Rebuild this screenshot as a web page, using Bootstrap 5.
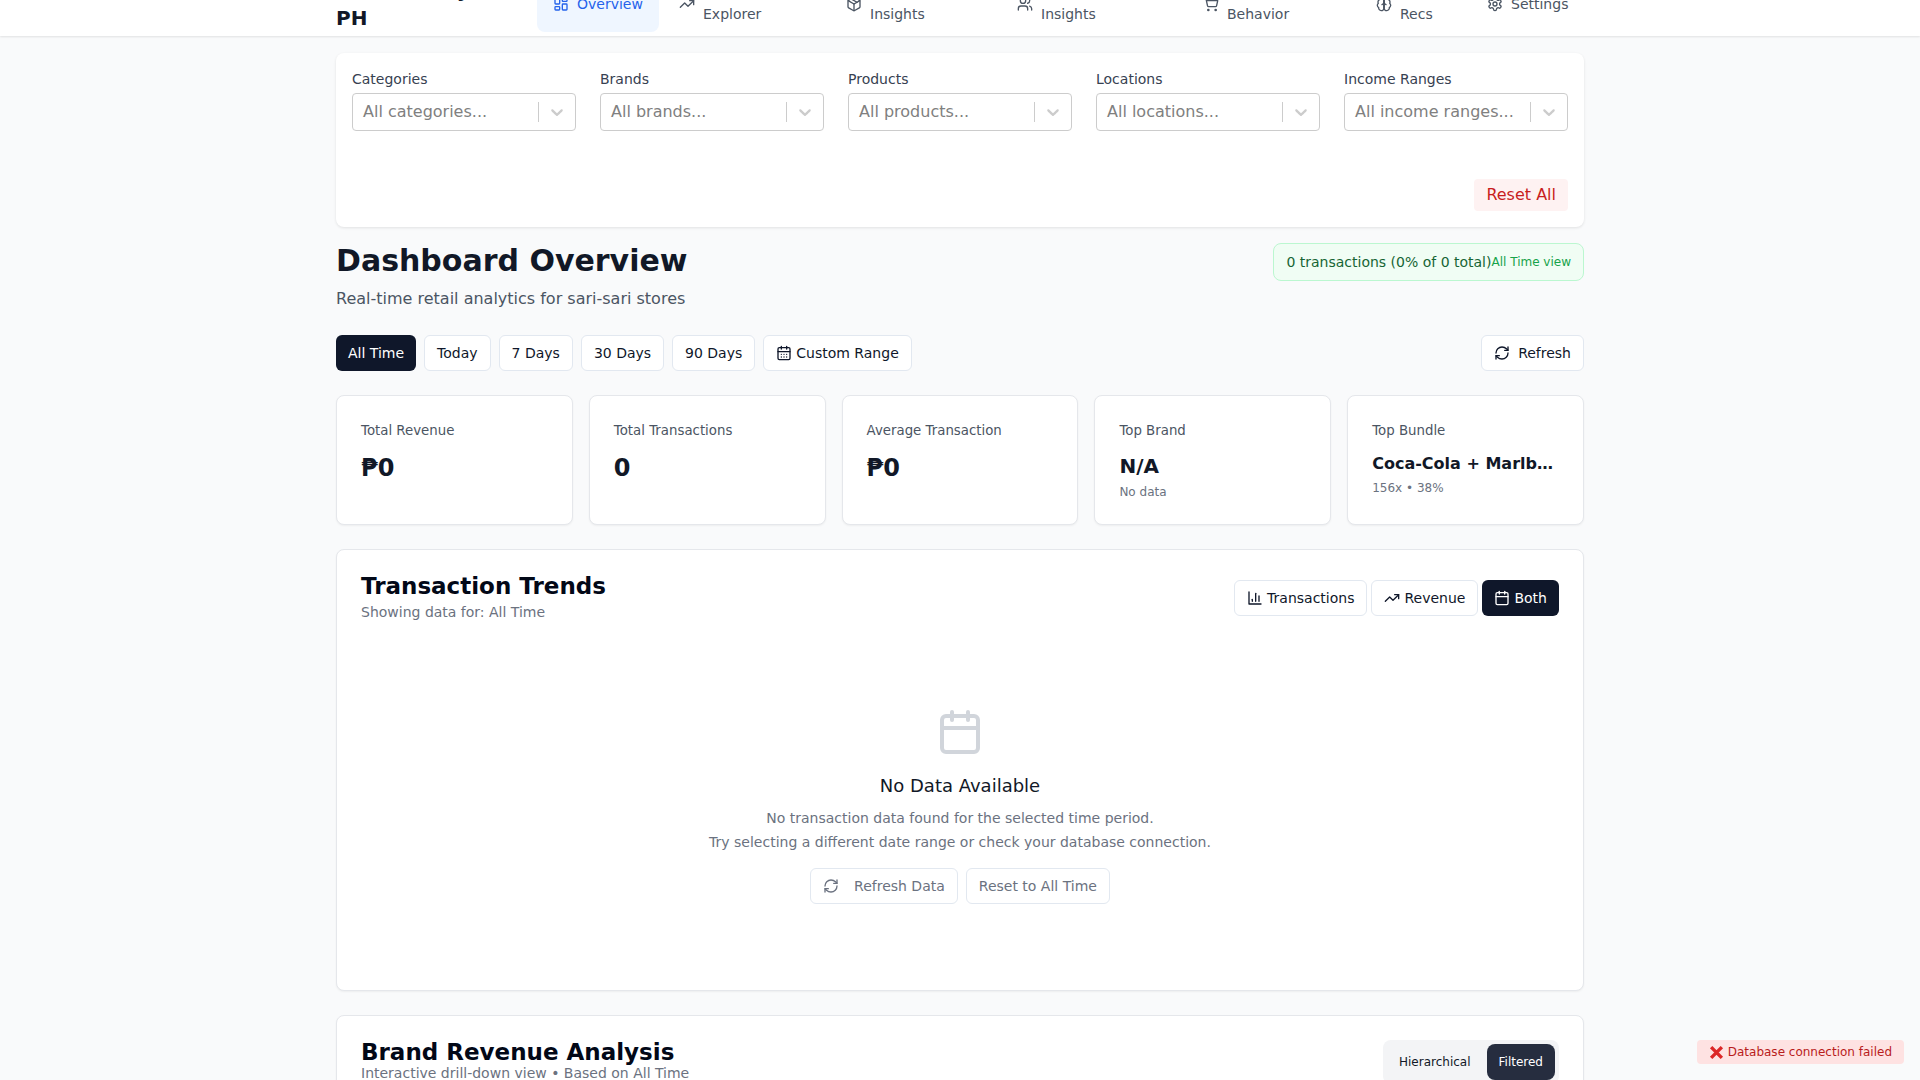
<!DOCTYPE html>
<html lang="en">
<head>
    <meta charset="UTF-8">
    <meta name="viewport" content="width=device-width, initial-scale=1.0">
    <title>Scout Analytics PH</title>
    <link href="https://cdn.jsdelivr.net/npm/bootstrap@5.3.0/dist/css/bootstrap.min.css" rel="stylesheet">

    <style>
        html, body { height: 100vh; overflow: hidden; }
        body {
            background: #f9fafb;
            font-family: "DejaVu Sans", sans-serif;
            color: #111827;
        }
        .ico { width: 16px; height: 16px; flex-shrink: 0; fill: none; stroke: currentColor; stroke-width: 2; stroke-linecap: round; stroke-linejoin: round; }

        /* Top bar: taller than its box, the first lines are cut off */
        .top-bar { background: #fff; height: 36px; box-shadow: 0 1px 2px rgba(0,0,0,.1); overflow: hidden; }
        .page-wrap { width: 1280px; padding: 0 16px; margin: 0 auto; }
        .top-row { height: 32px; }
        .brand-name { width: 185px; height: 56px; flex-shrink: 0; font-size: 20px; line-height: 28px; font-weight: 700; color: #111827; }
        .tab-row { height: 56px; gap: 4px; flex-shrink: 0; }
        .tab-item { display: flex; align-items: center; gap: 8px; padding: 0 16px; border-radius: 8px; font-size: 14px; line-height: 20px; color: #4b5563; }
        .tab-item.on { background: #eff6ff; color: #2563eb; }
        .tw-1 { width: 122px; } .tw-2 { width: 163px; } .tw-3 { width: 167px; } .tw-4 { width: 182px; }
        .tw-5 { width: 169px; } .tw-6 { width: 107px; } .tw-7 { width: 113px; }

        /* Filters */
        .filter-box { background: #fff; border-radius: 8px; box-shadow: 0 1px 3px rgba(0,0,0,.1); padding: 16px; margin-top: 17px; height: 174px; }
        .filter-label { font-size: 14px; line-height: 20px; color: #374151; margin-bottom: 4px; }
        .fake-select { height: 38px; border: 1px solid #ccc; border-radius: 4px; background: #fff; padding-left: 10px; }
        .fake-select span { flex: 1; font-size: 16px; color: #808080; white-space: nowrap; }
        .sel-sep { width: 1px; height: 20px; background: #ccc; }
        .sel-arrow { width: 20px; height: 20px; margin: 0 8px; fill: #ccc; }
        .reset-btn { font-size: 16px; line-height: 24px; padding: 4px 12px; color: #c81e1e; background: #fef2f2; border: 0; border-radius: 4px; margin-top: 48px; }

        /* Heading */
        .head-row { margin-top: 16px; }
        .page-title { font-size: 30px; line-height: 36px; font-weight: 700; color: #111827; margin: 0; }
        .page-sub { font-size: 16px; line-height: 24px; color: #4b5563; margin: 8px 0 0; }
        .status-pill { background: #f0fdf4; border: 1px solid #bbf7d0; border-radius: 8px; padding: 8px 12px; font-size: 14px; line-height: 20px; color: #166534; }
        .status-pill small { font-size: 12px; color: #16a34a; }

        /* Buttons */
        .tool-btn { display: inline-flex; align-items: center; gap: 4px; height: 36px; padding: 7px 12px; font-size: 14px; line-height: 20px; color: #0f172a; background: #fff; border: 1px solid #e2e8f0; border-radius: 6px; }
        .tool-btn.on { background: #0f172a; color: #fff; border: 0; padding: 8px 12px; }
        .tool-btn.dim { color: #6b7280; }
        .date-row { margin-top: 24px; }

        /* Stats */
        .stat-row { margin-top: 8px; }
        .stat-box { height: 130px; background: #fff; border: 1px solid #e5e7eb; border-radius: 8px; box-shadow: 0 1px 2px rgba(0,0,0,.05); padding: 25px 24px 24px; }
        .stat-label { font-size: 13.33px; line-height: 20px; color: #4b5563; }
        .stat-big { font-size: 24px; line-height: 32px; font-weight: 700; color: #111827; margin-top: 11px; }
        .stat-mid { font-size: 20px; line-height: 28px; font-weight: 700; color: #111827; margin-top: 11px; }
        .stat-low { font-size: 16px; line-height: 28px; font-weight: 700; color: #111827; margin-top: 9px; white-space: nowrap; overflow: hidden; text-overflow: ellipsis; }
        .stat-note { font-size: 12px; line-height: 16px; color: #6b7280; margin-top: 2px; }
        .stat-mid + .stat-note { margin-top: 4px; }

        /* Panels */
        .panel-box { background: #fff; border: 1px solid #e5e7eb; border-radius: 8px; box-shadow: 0 1px 2px rgba(0,0,0,.05); padding: 24px; }
        .trend-panel { margin-top: 24px; height: 442px; }
        .brand-panel { margin-top: 24px; height: 300px; }
        .panel-title { font-size: 23px; line-height: 24px; font-weight: 700; color: #020817; margin: 0; }
        .panel-sub { font-size: 14px; line-height: 20px; color: #6b7280; margin: 4px 0 0; }
        .brand-panel .panel-sub { margin-top: -1px; }
        .empty-wrap { margin-top: 86px; }
        .empty-ico { width: 48px; height: 48px; fill: none; stroke: #d1d5db; stroke-width: 2; stroke-linecap: round; stroke-linejoin: round; }
        .empty-title { font-size: 18px; line-height: 28px; font-weight: 400; color: #111827; margin: 16px 0 0; }
        .empty-text { font-size: 14px; line-height: 24px; color: #6b7280; margin: 6px 0 0; }
        .empty-btns { margin-top: 14px; }
        .gap-wide { gap: 15px; }

        .mode-switch { background: #f3f4f6; border-radius: 8px; padding: 4px; gap: 4px; }
        .mode-btn { font-size: 12px; line-height: 16px; padding: 10px 12px; height: 36px; border-radius: 8px; color: #111827; }
        .mode-btn.on { background: #262d3f; color: #fff; }

        /* Toast */
        .err-toast { position: fixed; right: 16px; bottom: 16px; height: 24px; display: flex; align-items: center; gap: 4px; padding: 0 12px; background: #fee2e2; border-radius: 4px; font-size: 12px; color: #b91c1c; }
        .err-x { width: 15px; height: 15px; stroke: #dc2626; stroke-width: 3.2; fill: none; }
    </style>
</head>
<body>

    <!-- Icone -->
    <svg width="0" height="0" class="position-absolute">
        <symbol id="i-dash" viewBox="0 0 24 24"><rect x="3" y="3" width="7" height="9" rx="1"/><rect x="14" y="3" width="7" height="5" rx="1"/><rect x="14" y="12" width="7" height="9" rx="1"/><rect x="3" y="16" width="7" height="5" rx="1"/></symbol>
        <symbol id="i-trend" viewBox="0 0 24 24"><polyline points="22 7 13.5 15.5 8.5 10.5 2 17"/><polyline points="16 7 22 7 22 13"/></symbol>
        <symbol id="i-box" viewBox="0 0 24 24"><path d="m7.5 4.27 9 5.15"/><path d="M21 8a2 2 0 0 0-1-1.73l-7-4a2 2 0 0 0-2 0l-7 4A2 2 0 0 0 3 8v8a2 2 0 0 0 1 1.73l7 4a2 2 0 0 0 2 0l7-4A2 2 0 0 0 21 16Z"/><path d="m3.3 7 8.7 5 8.7-5"/><path d="M12 22V12"/></symbol>
        <symbol id="i-users" viewBox="0 0 24 24"><path d="M16 21v-2a4 4 0 0 0-4-4H6a4 4 0 0 0-4 4v2"/><circle cx="9" cy="7" r="4"/><path d="M22 21v-2a4 4 0 0 0-3-3.87"/><path d="M16 3.13a4 4 0 0 1 0 7.75"/></symbol>
        <symbol id="i-cart" viewBox="0 0 24 24"><circle cx="8" cy="21" r="1"/><circle cx="19" cy="21" r="1"/><path d="M2.05 2.05h2l2.66 12.42a2 2 0 0 0 2 1.58h9.78a2 2 0 0 0 1.95-1.57l1.65-7.43H5.12"/></symbol>
        <symbol id="i-brain" viewBox="0 0 24 24"><path d="M12 5a3 3 0 1 0-5.997.125 4 4 0 0 0-2.526 5.77 4 4 0 0 0 .556 6.588A4 4 0 1 0 12 18Z"/><path d="M12 5a3 3 0 1 1 5.997.125 4 4 0 0 1 2.526 5.77 4 4 0 0 1-.556 6.588A4 4 0 1 1 12 18Z"/><path d="M15 13a4.5 4.5 0 0 1-3-4 4.5 4.5 0 0 1-3 4"/><path d="M12 18V5"/></symbol>
        <symbol id="i-gear" viewBox="0 0 24 24"><path d="M12.22 2h-.44a2 2 0 0 0-2 2v.18a2 2 0 0 1-1 1.73l-.43.25a2 2 0 0 1-2 0l-.15-.08a2 2 0 0 0-2.73.73l-.22.38a2 2 0 0 0 .73 2.73l.15.1a2 2 0 0 1 1 1.72v.51a2 2 0 0 1-1 1.74l-.15.09a2 2 0 0 0-.73 2.73l.22.38a2 2 0 0 0 2.73.73l.15-.08a2 2 0 0 1 2 0l.43.25a2 2 0 0 1 1 1.73V20a2 2 0 0 0 2 2h.44a2 2 0 0 0 2-2v-.18a2 2 0 0 1 1-1.73l.43-.25a2 2 0 0 1 2 0l.15.08a2 2 0 0 0 2.73-.73l.22-.39a2 2 0 0 0-.73-2.73l-.15-.08a2 2 0 0 1-1-1.74v-.5a2 2 0 0 1 1-1.74l.15-.09a2 2 0 0 0 .73-2.73l-.22-.38a2 2 0 0 0-2.73-.73l-.15.08a2 2 0 0 1-2 0l-.43-.25a2 2 0 0 1-1-1.73V4a2 2 0 0 0-2-2z"/><circle cx="12" cy="12" r="3"/></symbol>
        <symbol id="i-cal" viewBox="0 0 24 24"><rect x="3" y="4" width="18" height="18" rx="2"/><line x1="16" y1="2" x2="16" y2="6"/><line x1="8" y1="2" x2="8" y2="6"/><line x1="3" y1="10" x2="21" y2="10"/></symbol>
        <symbol id="i-caldays" viewBox="0 0 24 24"><rect x="3" y="4" width="18" height="18" rx="2"/><path d="M16 2v4M8 2v4M3 10h18M8 14h.01M12 14h.01M16 14h.01M8 18h.01M12 18h.01M16 18h.01"/></symbol>
        <symbol id="i-refresh" viewBox="0 0 24 24"><path d="M3 12a9 9 0 0 1 9-9 9.75 9.75 0 0 1 6.74 2.74L21 8"/><path d="M21 3v5h-5"/><path d="M21 12a9 9 0 0 1-9 9 9.75 9.75 0 0 1-6.74-2.74L3 16"/><path d="M8 16H3v5"/></symbol>
        <symbol id="i-bars" viewBox="0 0 24 24"><path d="M3 3v18h18"/><path d="M18 17V9"/><path d="M13 17V5"/><path d="M8 17v-3"/></symbol>
        <symbol id="i-arrow" viewBox="0 0 20 20"><path d="M4.516 7.548c0.436-0.446 1.043-0.481 1.576 0l3.908 3.747 3.908-3.747c0.533-0.481 1.141-0.446 1.574 0 0.436 0.445 0.408 1.197 0 1.615-0.406 0.418-4.695 4.502-4.695 4.502-0.217 0.223-0.502 0.335-0.787 0.335s-0.57-0.112-0.789-0.335c0 0-4.287-4.084-4.695-4.502s-0.436-1.17 0-1.615z"/></symbol>
    </svg>

    <!-- Top bar -->
    <header class="top-bar">
        <div class="page-wrap">
            <div class="top-row d-flex justify-content-between align-items-end">
                <div class="brand-name">Scout Analytics PH</div>
                <nav class="tab-row d-flex">
                    <div class="tab-item on tw-1"><svg class="ico"><use href="#i-dash"/></svg><span>Overview</span></div>
                    <div class="tab-item tw-2"><svg class="ico"><use href="#i-trend"/></svg><span>Transaction Explorer</span></div>
                    <div class="tab-item tw-3"><svg class="ico"><use href="#i-box"/></svg><span>Product Mix Insights</span></div>
                    <div class="tab-item tw-4"><svg class="ico"><use href="#i-users"/></svg><span>Customer<br>Insights</span></div>
                    <div class="tab-item tw-5"><svg class="ico"><use href="#i-cart"/></svg><span>Consumer Behavior</span></div>
                    <div class="tab-item tw-6"><svg class="ico"><use href="#i-brain"/></svg><span>AI<br>Recs</span></div>
                    <div class="tab-item tw-7"><svg class="ico"><use href="#i-gear"/></svg><span>Settings</span></div>
                </nav>
            </div>
        </div>
    </header>

    <main class="page-wrap">

        <!-- Filtri -->
        <section class="filter-box">
            <div class="row row-cols-5 g-4">
                <div class="col">
                    <div class="filter-label">Categories</div>
                    <div class="fake-select d-flex align-items-center"><span>All categories...</span><i class="sel-sep"></i><svg class="sel-arrow"><use href="#i-arrow"/></svg></div>
                </div>
                <div class="col">
                    <div class="filter-label">Brands</div>
                    <div class="fake-select d-flex align-items-center"><span>All brands...</span><i class="sel-sep"></i><svg class="sel-arrow"><use href="#i-arrow"/></svg></div>
                </div>
                <div class="col">
                    <div class="filter-label">Products</div>
                    <div class="fake-select d-flex align-items-center"><span>All products...</span><i class="sel-sep"></i><svg class="sel-arrow"><use href="#i-arrow"/></svg></div>
                </div>
                <div class="col">
                    <div class="filter-label">Locations</div>
                    <div class="fake-select d-flex align-items-center"><span>All locations...</span><i class="sel-sep"></i><svg class="sel-arrow"><use href="#i-arrow"/></svg></div>
                </div>
                <div class="col">
                    <div class="filter-label">Income Ranges</div>
                    <div class="fake-select d-flex align-items-center"><span>All income ranges...</span><i class="sel-sep"></i><svg class="sel-arrow"><use href="#i-arrow"/></svg></div>
                </div>
            </div>
            <div class="d-flex justify-content-end"><button class="reset-btn" type="button">Reset All</button></div>
        </section>

        <!-- Titolo -->
        <section class="head-row d-flex justify-content-between align-items-start">
            <div>
                <h1 class="page-title">Dashboard Overview</h1>
                <p class="page-sub">Real-time retail analytics for sari-sari stores</p>
            </div>
            <div class="status-pill d-flex align-items-center">0 transactions (0% of 0 total)<small>All Time view</small></div>
        </section>

        <!-- Periodo -->
        <section class="date-row d-flex justify-content-between">
            <div class="d-flex gap-2">
                <button class="tool-btn on" type="button">All Time</button>
                <button class="tool-btn" type="button">Today</button>
                <button class="tool-btn" type="button">7 Days</button>
                <button class="tool-btn" type="button">30 Days</button>
                <button class="tool-btn" type="button">90 Days</button>
                <button class="tool-btn" type="button"><svg class="ico"><use href="#i-caldays"/></svg>Custom Range</button>
            </div>
            <button class="tool-btn gap-2" type="button"><svg class="ico"><use href="#i-refresh"/></svg>Refresh</button>
        </section>

        <!-- Statistiche -->
        <section class="stat-row row row-cols-5 g-3">
            <div class="col"><div class="stat-box"><div class="stat-label">Total Revenue</div><div class="stat-big">₱0</div></div></div>
            <div class="col"><div class="stat-box"><div class="stat-label">Total Transactions</div><div class="stat-big">0</div></div></div>
            <div class="col"><div class="stat-box"><div class="stat-label">Average Transaction</div><div class="stat-big">₱0</div></div></div>
            <div class="col"><div class="stat-box"><div class="stat-label">Top Brand</div><div class="stat-mid">N/A</div><div class="stat-note">No data</div></div></div>
            <div class="col"><div class="stat-box"><div class="stat-label">Top Bundle</div><div class="stat-low">Coca-Cola + Marlboro</div><div class="stat-note">156x • 38%</div></div></div>
        </section>

        <!-- Andamento -->
        <section class="panel-box trend-panel">
            <div class="d-flex justify-content-between align-items-center">
                <div>
                    <h2 class="panel-title">Transaction Trends</h2>
                    <p class="panel-sub">Showing data for: All Time</p>
                </div>
                <div class="d-flex gap-1">
                    <button class="tool-btn" type="button"><svg class="ico"><use href="#i-bars"/></svg>Transactions</button>
                    <button class="tool-btn" type="button"><svg class="ico"><use href="#i-trend"/></svg>Revenue</button>
                    <button class="tool-btn on" type="button"><svg class="ico"><use href="#i-cal"/></svg>Both</button>
                </div>
            </div>
            <div class="empty-wrap text-center">
                <svg class="empty-ico"><use href="#i-cal"/></svg>
                <h3 class="empty-title">No Data Available</h3>
                <p class="empty-text">No transaction data found for the selected time period.<br>Try selecting a different date range or check your database connection.</p>
                <div class="empty-btns d-flex justify-content-center gap-2">
                    <button class="tool-btn dim gap-wide" type="button"><svg class="ico"><use href="#i-refresh"/></svg>Refresh Data</button>
                    <button class="tool-btn dim" type="button">Reset to All Time</button>
                </div>
            </div>
        </section>

        <!-- Brand -->
        <section class="panel-box brand-panel d-flex justify-content-between align-items-start">
            <div>
                <h2 class="panel-title">Brand Revenue Analysis</h2>
                <p class="panel-sub">Interactive drill-down view • Based on All Time</p>
            </div>
            <div class="mode-switch d-flex">
                <div class="mode-btn">Hierarchical</div>
                <div class="mode-btn on">Filtered</div>
            </div>
        </section>
    </main>

    <!-- Avviso -->
    <div class="err-toast">
        <svg class="err-x" viewBox="0 0 14 14"><path d="M2 2l10 10M12 2L2 12"/></svg>
        <span>Database connection failed</span>
    </div>

    <script src="https://cdn.jsdelivr.net/npm/bootstrap@5.3.0/dist/js/bootstrap.bundle.min.js"></script>
</body>
</html>
